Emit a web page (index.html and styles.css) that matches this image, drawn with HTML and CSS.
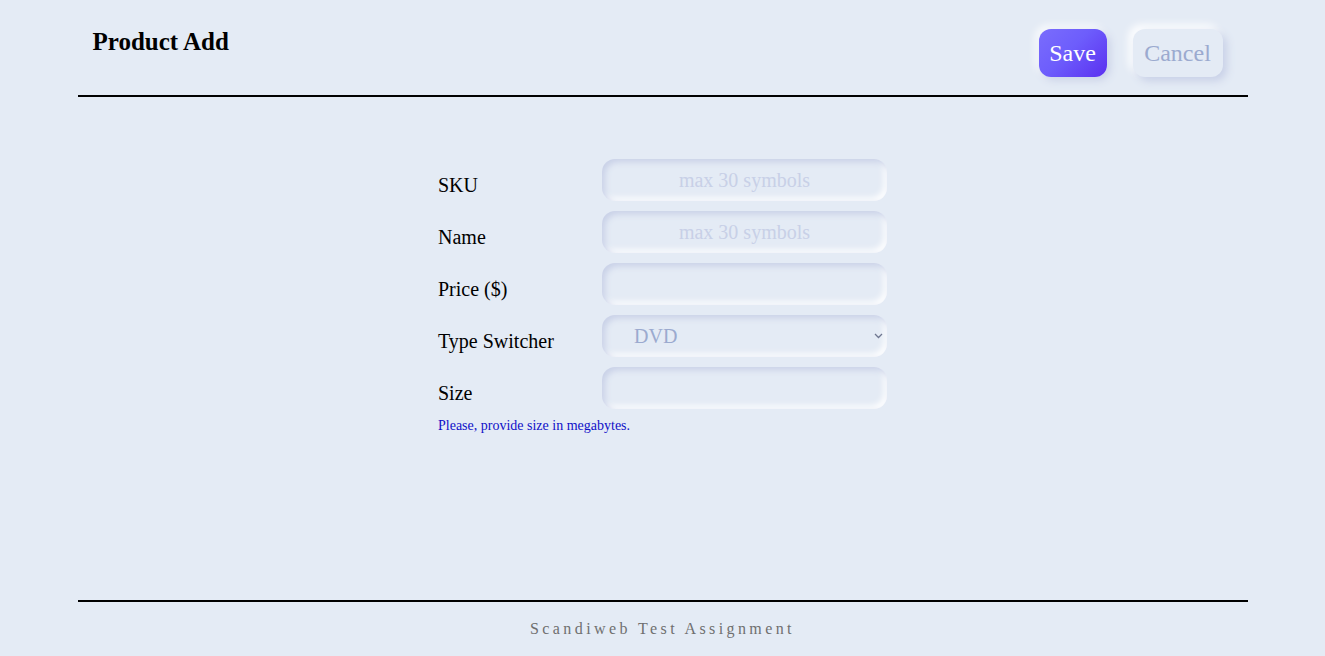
FILE: index.html
```html
<!DOCTYPE html>
<html lang="en">
<head>
<meta charset="utf-8">
<title>Product Add</title>
<link rel="stylesheet" href="styles.css">
</head>
<body>
<header class="header">
  <h1 class="title">Product Add</h1>
  <div class="actions">
    <button class="btn btn-save" type="button">Save</button>
    <button class="btn btn-cancel" type="button">Cancel</button>
  </div>
</header>
<main class="main">
  <form class="form" id="product_form">
    <div class="row">
      <label class="label" for="sku">SKU</label>
      <input class="field" id="sku" type="text" placeholder="max 30 symbols">
    </div>
    <div class="row">
      <label class="label" for="name">Name</label>
      <input class="field" id="name" type="text" placeholder="max 30 symbols">
    </div>
    <div class="row">
      <label class="label" for="price">Price ($)</label>
      <input class="field" id="price" type="text">
    </div>
    <div class="row">
      <label class="label" for="productType">Type Switcher</label>
      <div class="select-wrap">
        <select class="field select" id="productType">
          <option>DVD</option>
          <option>Book</option>
          <option>Furniture</option>
        </select>
        <svg class="chev" width="9" height="6" viewBox="0 0 9 6"><path d="M1 1 L4.5 4.5 L8 1" fill="none" stroke="#6f7790" stroke-width="1.3"/></svg>
      </div>
    </div>
    <div class="row">
      <label class="label" for="size">Size</label>
      <input class="field" id="size" type="text">
    </div>
    <p class="hint">Please, provide size in megabytes.</p>
  </form>
</main>
<footer class="footer">Scandiweb Test Assignment</footer>
</body>
</html>
```
FILE: styles.css
```css
html, body {
  margin: 0;
  padding: 0;
}
body {
  background: #e4ebf5;
  font-family: "Liberation Serif", "Times New Roman", serif;
  min-height: 100vh;
  display: flex;
  flex-direction: column;
  color: #000;
}
.header {
  width: 1170px;
  margin: 0 auto;
  box-sizing: border-box;
  height: 97px;
  border-bottom: 2px solid #000;
  display: flex;
  justify-content: space-between;
  align-items: flex-start;
  padding: 28px 25px 0 15px;
}
.title {
  margin: 0;
  font-size: 25px;
  font-weight: bold;
  line-height: 27px;
}
.actions {
  display: flex;
  gap: 26px;
  padding-top: 1px;
}
.btn {
  height: 48px;
  border: none;
  border-radius: 12px;
  font-family: "Liberation Serif", "Times New Roman", serif;
  font-size: 24px;
  padding: 0 10px;
  cursor: pointer;
}
.btn-save {
  width: 68px;
  color: #fff;
  background: linear-gradient(135deg, #7a6dfc 0%, #6d5dfc 45%, #5b2ff0 100%);
  box-shadow: 3px 3px 8px #c8d0e7, -3px -3px 8px #ffffff;
}
.btn-cancel {
  width: 90px;
  color: #9baacf;
  background: #e4ebf5;
  box-shadow: 4px 4px 8px #c8d0e7, -4px -4px 8px #ffffff;
}
.main {
  flex: 1;
  display: flex;
  justify-content: center;
}
.form {
  width: 449px;
  padding-top: 62px;
  display: flex;
  flex-direction: column;
  gap: 10px;
}
.row {
  display: flex;
  align-items: center;
  height: 42px;
}
.label {
  width: 164px;
  flex: none;
  font-size: 20px;
  padding-top: 11px;
}
.field {
  width: 285px;
  height: 42px;
  box-sizing: border-box;
  border: none;
  outline: none;
  border-radius: 13px;
  background: #e4ebf5;
  box-shadow: inset 3px 3px 6px #c8d0e7, inset -3px -3px 6px #ffffff;
  font-family: "Liberation Serif", "Times New Roman", serif;
  font-size: 20px;
  text-align: center;
  color: #9baacf;
  padding: 0 12px;
}
.field::placeholder {
  color: #c8d0e7;
}
.select-wrap {
  position: relative;
  width: 285px;
  height: 42px;
}
.select {
  -webkit-appearance: none;
  appearance: none;
  text-align: left;
  padding-left: 32px;
}
.chev {
  position: absolute;
  right: 4px;
  top: 18px;
  pointer-events: none;
}
.hint {
  margin: -1px 0 0;
  font-size: 14px;
  color: #1010c8;
}
.footer {
  width: 1170px;
  margin: 0 auto;
  box-sizing: border-box;
  height: 56px;
  border-top: 2px solid #000;
  text-align: center;
  font-size: 16px;
  letter-spacing: 3.4px;
  color: #6f6f6f;
  padding-top: 18px;
}
```
